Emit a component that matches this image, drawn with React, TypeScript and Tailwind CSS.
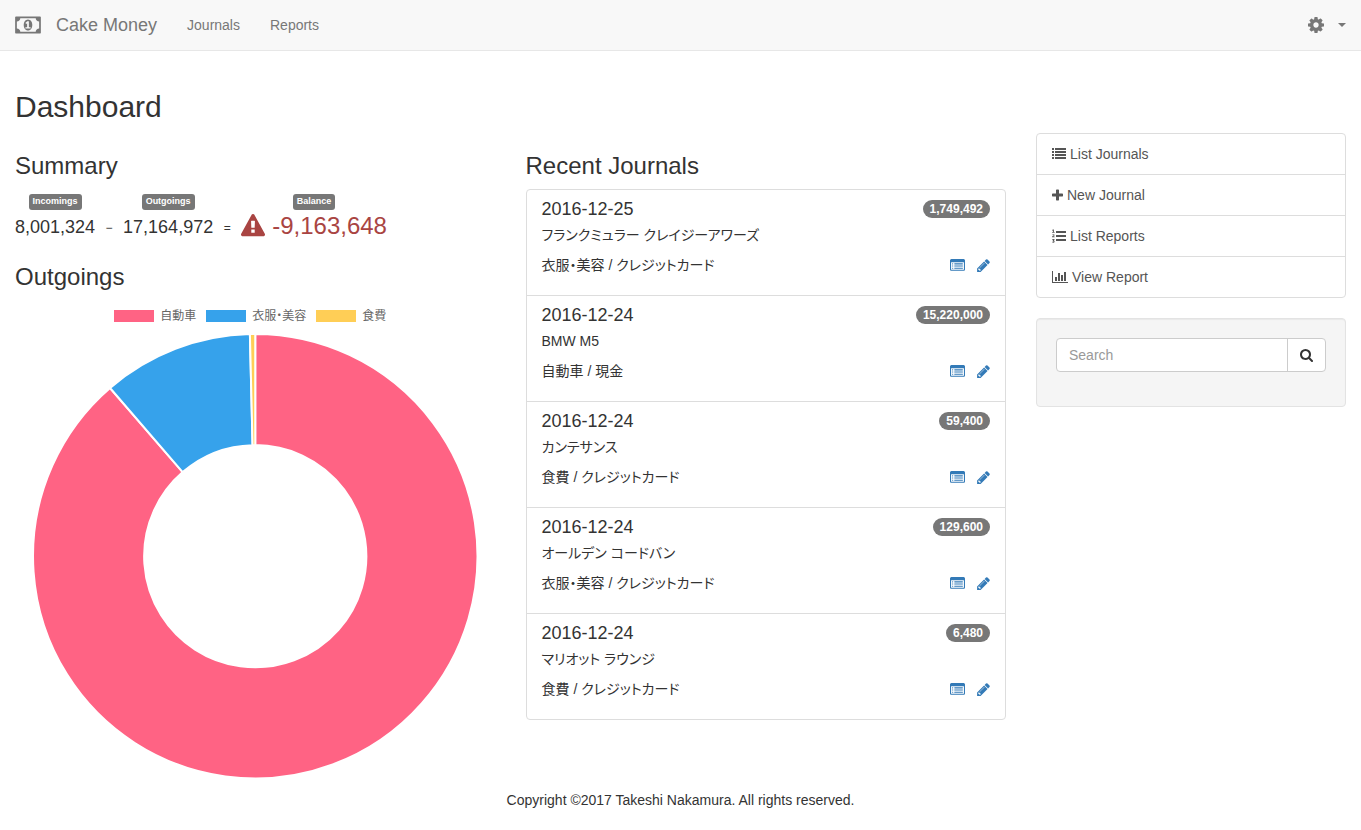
import { ReactNode } from "react";

const journals = [
  { date: "2016-12-25", name: "フランクミュラー クレイジーアワーズ", amount: "1,749,492", tags: "衣服・美容 / クレジットカード" },
  { date: "2016-12-24", name: "BMW M5", amount: "15,220,000", tags: "自動車 / 現金" },
  { date: "2016-12-24", name: "カンテサンス", amount: "59,400", tags: "食費 / クレジットカード" },
  { date: "2016-12-24", name: "オールデン コードバン", amount: "129,600", tags: "衣服・美容 / クレジットカード" },
  { date: "2016-12-24", name: "マリオット ラウンジ", amount: "6,480", tags: "食費 / クレジットカード" },
];

const slices = [
  { label: "自動車", value: 15220000, color: "#ff6384" },
  { label: "衣服・美容", value: 1879092, color: "#36a2eb" },
  { label: "食費", value: 65880, color: "#ffce56" },
];

// Glyphs are drawn on a canvas 1792 units high; w is the advance width.
function Glyph({ d, className, w = 1792 }: { d: string; className: string; w?: number }) {
  return (
    <svg viewBox={`0 0 ${w} 1792`} fill="currentColor" aria-hidden="true" className={className}>
      <path d={d} />
    </svg>
  );
}

const MONEY =
  "M768 1152h384v-96h-128v-448h-114l-148 137 77 80q42-37 55-57h2v288h-128v96zm512-256q0 70-21 142t-59.500 134-101.500 101-138 39-138-39-101.500-101-59.500-134-21-142 21-142 59.500-134 101.500-101 138-39 138 39 101.500 101 59.500 134 21 142zm512 256v-512q-106 0-181-75t-75-181h-1152q0 106-75 181t-181 75v512q106 0 181 75t75 181h1152q0-106 75-181t181-75zm128-832v1152q0 26-19 45t-45 19h-1792q-26 0-45-19t-19-45v-1152q0-26 19-45t45-19h1792q26 0 45 19t19 45z";
const LIST =
  "M256 1312v192q0 13-9.500 22.500t-22.500 9.500h-192q-13 0-22.500-9.500t-9.500-22.500v-192q0-13 9.500-22.500t22.500-9.500h192q13 0 22.500 9.500t9.500 22.500zm0-384v192q0 13-9.500 22.500t-22.500 9.500h-192q-13 0-22.500-9.500t-9.500-22.500v-192q0-13 9.500-22.500t22.500-9.500h192q13 0 22.500 9.500t9.500 22.500zm0-384v192q0 13-9.500 22.500t-22.500 9.500h-192q-13 0-22.500-9.500t-9.500-22.500v-192q0-13 9.500-22.500t22.500-9.500h192q13 0 22.500 9.500t9.500 22.500zm1536 768v192q0 13-9.500 22.500t-22.500 9.500h-1344q-13 0-22.500-9.500t-9.500-22.500v-192q0-13 9.500-22.500t22.500-9.500h1344q13 0 22.500 9.500t9.500 22.500zm-1536-1152v192q0 13-9.500 22.500t-22.500 9.500h-192q-13 0-22.500-9.500t-9.500-22.500v-192q0-13 9.500-22.500t22.500-9.500h192q13 0 22.500 9.500t9.500 22.500zm1536 768v192q0 13-9.500 22.500t-22.500 9.500h-1344q-13 0-22.500-9.500t-9.500-22.500v-192q0-13 9.500-22.500t22.500-9.500h1344q13 0 22.500 9.500t9.500 22.500zm0-384v192q0 13-9.500 22.500t-22.500 9.500h-1344q-13 0-22.500-9.500t-9.500-22.500v-192q0-13 9.500-22.500t22.500-9.500h1344q13 0 22.500 9.500t9.500 22.500zm0-384v192q0 13-9.500 22.500t-22.500 9.500h-1344q-13 0-22.500-9.500t-9.500-22.500v-192q0-13 9.500-22.500t22.500-9.500h1344q13 0 22.500 9.500t9.500 22.500z";
const PLUS =
  "M1408 800v192q0 40-28 68t-68 28h-416v416q0 40-28 68t-68 28h-192q-40 0-68-28t-28-68v-416h-416q-40 0-68-28t-28-68v-192q0-40 28-68t68-28h416v-416q0-40 28-68t68-28h192q40 0 68 28t28 68v416h416q40 0 68 28t28 68z";
const BARS =
  "M640 896v512h-256v-512h256zm384-512v1024h-256v-1024h256zm1024 1152v128h-2048v-1536h128v1408h1920zm-640-896v768h-256v-768h256zm384-384v1152h-256v-1152h256z";
const ORDERED =
  "M0 128l140-64h100v330h90v90h-310v-90h100v-200h-120zM20 750q50-90 160-90q150 0 150 120q0 70-80 130l-70 60h160v95h-330v-90l170-140q50-40 50-60q0-30-50-30q-40 0-70 50zM20 1290h300v85l-90 90q100 30 100 130q0 150-170 150q-90 0-150-50l50-85q45 35 90 35q60 0 60-45q0-60-110-55l-20-50 80-110h-140zM544 256h1216q32 0 32 32v192q0 32-32 32h-1216q-32 0-32-32v-192q0-32 32-32zM544 768h1216q32 0 32 32v192q0 32-32 32h-1216q-32 0-32-32v-192q0-32 32-32zM544 1280h1216q32 0 32 32v192q0 32-32 32h-1216q-32 0-32-32v-192q0-32 32-32z";
const LIST_ALT =
  "M384 1184v64q0 13-9.500 22.500t-22.500 9.500h-64q-13 0-22.500-9.500t-9.500-22.500v-64q0-13 9.500-22.500t22.500-9.500h64q13 0 22.500 9.500t9.500 22.500zm0-256v64q0 13-9.500 22.500t-22.500 9.500h-64q-13 0-22.500-9.500t-9.500-22.500v-64q0-13 9.500-22.500t22.500-9.500h64q13 0 22.500 9.500t9.500 22.500zm0-256v64q0 13-9.500 22.500t-22.500 9.500h-64q-13 0-22.500-9.500t-9.500-22.500v-64q0-13 9.500-22.500t22.500-9.500h64q13 0 22.500 9.500t9.500 22.500zm1152 512v64q0 13-9.500 22.500t-22.500 9.500h-960q-13 0-22.500-9.500t-9.500-22.500v-64q0-13 9.500-22.500t22.500-9.500h960q13 0 22.500 9.500t9.500 22.500zm0-256v64q0 13-9.500 22.500t-22.500 9.500h-960q-13 0-22.500-9.500t-9.500-22.500v-64q0-13 9.500-22.500t22.500-9.500h960q13 0 22.500 9.500t9.500 22.500zm0-256v64q0 13-9.500 22.500t-22.500 9.500h-960q-13 0-22.500-9.500t-9.500-22.500v-64q0-13 9.500-22.500t22.500-9.500h960q13 0 22.500 9.500t9.500 22.500zm128 704v-832q0-13-9.500-22.500t-22.500-9.500h-1472q-13 0-22.500 9.500t-9.500 22.500v832q0 13 9.500 22.500t22.500 9.500h1472q13 0 22.500-9.500t9.500-22.500zm128-1088v1088q0 66-47 113t-113 47h-1472q-66 0-113-47t-47-113v-1088q0-66 47-113t113-47h1472q66 0 113 47t47 113z";
const PENCIL =
  "M491 1536l91-91-235-235-91 91v107h128v128h107zm523-928q0-22-22-22-10 0-17 7l-542 542q-7 7-7 17 0 22 22 22 10 0 17-7l542-542q7-7 7-17zm-54-192l416 416-832 832h-416v-416zm683 96q0 53-37 90l-166 166-416-416 166-165q36-38 90-38 53 0 91 38l235 234q37 39 37 91z";
const COG =
  "M1024 896q0-106-75-181t-181-75-181 75-75 181 75 181 181 75 181-75 75-181zm512-109v222q0 12-8 23t-20 13l-185 28q-19 54-39 91 35 50 107 138 10 12 10 25t-9 23q-27 37-99 108t-94 71q-12 0-26-9l-138-108q-44 23-91 38-16 136-29 186-7 28-36 28h-222q-14 0-24.500-8.500t-11.500-21.500l-28-184q-49-16-90-37l-141 107q-10 9-25 9-14 0-25-11-126-114-165-168-7-10-7-23 0-12 8-23 15-21 51-66.500t54-70.500q-27-50-41-99l-183-27q-13-2-21-12.500t-8-23.500v-222q0-12 8-23t19-13l186-28q14-46 39-92-40-57-107-138-10-12-10-24 0-10 9-23 26-36 98.500-107.500t94.500-71.500q13 0 26 10l138 107q44-23 91-38 16-136 29-186 7-28 36-28h222q14 0 24.500 8.500t11.500 21.500l28 184q49 16 90 37l142-107q9-9 24-9 13 0 25 10 129 119 165 170 7 8 7 22 0 12-8 23-15 21-51 66.500t-54 70.500q26 50 41 98l183 28q13 2 21 12.500t8 23.500z";
const SEARCH =
  "M1152 832q0-185-131.500-316.500t-316.500-131.500-316.500 131.500-131.500 316.500 131.500 316.500 316.500 131.500 316.500-131.500 131.500-316.500zm512 832q0 52-38 90t-90 38q-54 0-90-38l-343-342q-179 124-399 124-143 0-273.500-55.500t-225-150-150-225-55.500-273.500 55.500-273.500 150-225 225-150 273.500-55.500 273.500 55.500 225 150 150 225 55.500 273.500q0 220-124 399l343 343q37 37 37 90z";
const WARNING =
  "M1024 1375v-190q0-14-9.500-23.500t-22.500-9.500h-192q-13 0-22.500 9.500t-9.500 23.500v190q0 14 9.500 23.500t22.500 9.500h192q13 0 22.500-9.500t9.500-23.500zm-2-374l18-459q0-12-10-19-13-11-24-11h-220q-11 0-24 11-10 7-10 21l17 457q0 10 10 16.500t24 6.500h185q14 0 23.500-6.500t10.500-16.500zm-14-934l768 1408q35 63-2 126-17 29-46.500 46t-63.500 17h-1536q-34 0-63.500-17t-46.500-46q-37-63-2-126l768-1408q17-31 47-49t65-18 65 18 47 49z";

function Panel({ title, children }: { title: string; children: ReactNode }) {
  return (
    <section>
      <h2 className="mt-5 mb-[10px] text-2xl leading-[26px]">{title}</h2>
      {children}
    </section>
  );
}

function Label({ children }: { children: ReactNode }) {
  return <span className="rounded-[3px] bg-[#777] px-1 pt-[2px] pb-1 text-[9px] leading-[10px] font-bold text-white">{children}</span>;
}

function Doughnut() {
  const total = slices.reduce((sum, s) => sum + s.value, 0);
  let angle = -Math.PI / 2;
  const outer = 222;
  const inner = 111;
  return (
    <svg viewBox="0 0 480 448" role="img" aria-label="Outgoings by category" className="block w-full">
      {slices.map((s) => {
        const a = angle;
        const b = a + (s.value / total) * Math.PI * 2;
        angle = b;
        const large = b - a > Math.PI ? 1 : 0;
        const at = (r: number, t: number) => `${240 + r * Math.cos(t)} ${224 + r * Math.sin(t)}`;
        return (
          <path
            key={s.label}
            d={`M${at(outer, a)}A${outer} ${outer} 0 ${large} 1 ${at(outer, b)}L${at(inner, b)}A${inner} ${inner} 0 ${large} 0 ${at(inner, a)}Z`}
            fill={s.color}
            stroke="#fff"
            strokeWidth="2"
            strokeLinejoin="bevel"
          />
        );
      })}
    </svg>
  );
}

const menu = [
  { text: "List Journals", d: LIST, w: 1792, size: "w-[14px]" },
  { text: "New Journal", d: PLUS, w: 1408, size: "w-[11px]" },
  { text: "List Reports", d: ORDERED, w: 1792, size: "w-[14px]" },
  { text: "View Report", d: BARS, w: 2048, size: "w-4" },
];

export default function App() {
  return (
    <div className="bg-white font-['Liberation_Sans','Noto_Sans_CJK_JP',sans-serif] text-sm leading-5 text-[#333] [font-feature-settings:'palt']">
      <nav className="flex h-[51px] items-center justify-between border-b border-[#e7e7e7] bg-[#f8f8f8] px-[15px] text-[#777]">
        <div className="flex items-center">
          <a href="#home" className="flex items-center gap-[15px] pr-[15px] text-lg leading-5">
            <Glyph d={MONEY} w={1920} className="h-6 w-[26px]" />
            Cake Money
          </a>
          <a href="#journals" className="px-[15px]">Journals</a>
          <a href="#reports" className="px-[15px]">Reports</a>
        </div>
        <button type="button" aria-label="Settings" className="flex items-center gap-[14px]">
          <Glyph d={COG} w={1536} className="h-5 w-4" />
          <svg viewBox="0 0 8 4" fill="currentColor" aria-hidden="true" className="h-1 w-2">
            <path d="M0 0h8L4 4z" />
          </svg>
        </button>
      </nav>

      <div className="flex gap-[30px] px-[15px] pt-[39px]">
        <main className="min-w-0 flex-[991]">
          <h1 className="mb-[10px] text-[30px] leading-[33px]">Dashboard</h1>
          <div className="grid grid-cols-2 gap-[30px]">
            <div>
              <Panel title="Summary">
                <div className="flex items-end pt-[5px] pb-[6px]">
                  <div className="flex flex-col items-center">
                    <Label>Incomings</Label>
                    <span className="pt-[7px] pb-px text-lg leading-5">8,001,324</span>
                  </div>
                  <span className="w-7 text-center text-xs leading-5">−</span>
                  <div className="flex flex-col items-center">
                    <Label>Outgoings</Label>
                    <span className="pt-[7px] pb-px text-lg leading-5">17,164,972</span>
                  </div>
                  <span className="w-7 text-center text-xs leading-5">=</span>
                  <div className="flex flex-col items-center text-[#a94442]">
                    <Label>Balance</Label>
                    <span className="flex items-center gap-[7px] pt-1 text-2xl leading-6">
                      <Glyph d={WARNING} className="h-6 w-6" />
                      -9,163,648
                    </span>
                  </div>
                </div>
              </Panel>
              <Panel title="Outgoings">
                <ul className="mb-[7px] flex justify-center gap-[10px] pt-[7px] pr-[10px] text-xs leading-[18px] text-[#666]">
                  {slices.map((s) => (
                    <li key={s.label} className="flex items-center gap-[6px]">
                      <svg viewBox="0 0 40 12" className="h-3 w-10" aria-hidden="true">
                        <rect width="40" height="12" fill={s.color} />
                      </svg>
                      {s.label}
                    </li>
                  ))}
                </ul>
                <Doughnut />
              </Panel>
            </div>
            <Panel title="Recent Journals">
              <ul className="divide-y divide-[#ddd] rounded border border-[#ddd]">
                {journals.map((j) => (
                  <li key={j.amount} className="px-[15px] pt-[9px] pb-5">
                    <div className="flex items-start justify-between">
                      <h3 className="mb-[6px] text-lg leading-5">{j.date}</h3>
                      <span className="mt-px rounded-[10px] bg-[#777] px-[7px] py-[3px] text-xs leading-3 font-bold text-white">{j.amount}</span>
                    </div>
                    <p className="text-sm leading-5">{j.name}</p>
                    <div className="mt-[10px] flex items-center justify-between">
                      <span>{j.tags}</span>
                      <span className="flex gap-[11px] text-[#337ab7]">
                        <a href="#view" aria-label="View journal"><Glyph d={LIST_ALT} className="h-[15px] w-[15px]" /></a>
                        <a href="#edit" aria-label="Edit journal"><Glyph d={PENCIL} w={1664} className="h-[15px] w-[14px]" /></a>
                      </span>
                    </div>
                  </li>
                ))}
              </ul>
            </Panel>
          </div>
        </main>

        <aside className="min-w-0 flex-[310] pt-[43px]">
          <nav className="divide-y divide-[#ddd] rounded border border-[#ddd] text-[#555]">
            {menu.map((m) => (
              <a key={m.text} href="#menu" className="flex items-center gap-1 px-[15px] py-[10px]">
                <Glyph d={m.d} w={m.w} className={`h-[14px] ${m.size}`} />
                {m.text}
              </a>
            ))}
          </nav>
          <form className="mt-5 rounded-[4px] border border-[#e3e3e3] bg-[#f5f5f5] px-[19px] pt-[19px] pb-[34px] shadow-[inset_0_1px_1px_rgba(0,0,0,0.05)]">
            <div className="flex h-[34px] rounded border border-[#ccc] bg-white">
              <input type="text" aria-label="Search" placeholder="Search" className="min-w-0 flex-1 rounded-l px-3 placeholder:text-[#999]" />
              <button type="button" aria-label="Submit search" className="border-l border-[#ccc] px-3 text-[#333]">
                <Glyph d={SEARCH} w={1664} className="h-[14px] w-[13px]" />
              </button>
            </div>
          </form>
        </aside>
      </div>
      <footer className="pt-[10px] pb-5 text-center">Copyright ©2017 Takeshi Nakamura. All rights reserved.</footer>
    </div>
  );
}
